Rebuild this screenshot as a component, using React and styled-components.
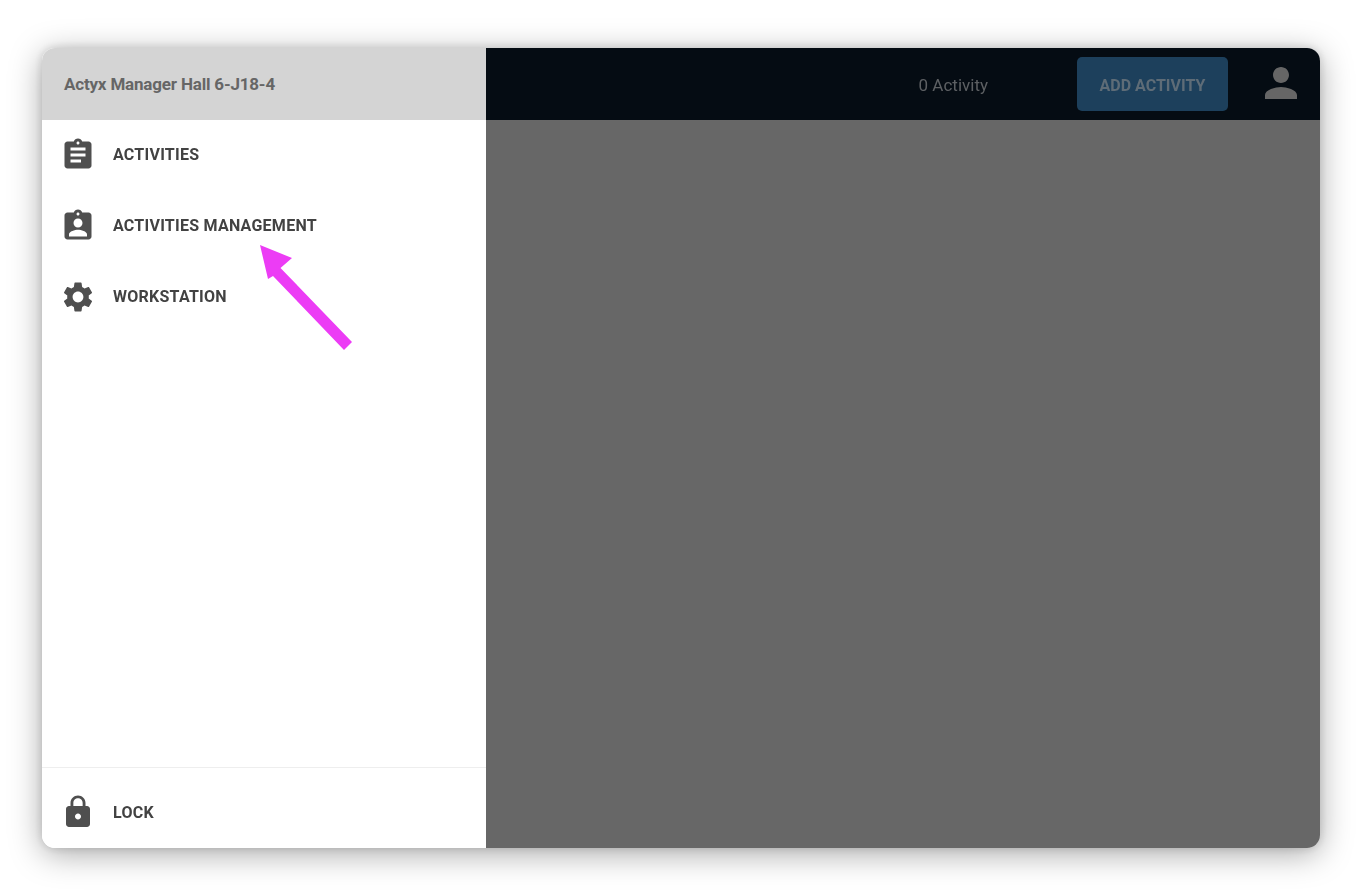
import styled, { createGlobalStyle } from "styled-components";

const GlobalStyle = createGlobalStyle`
    html, body {
        margin: 0;
        padding: 0;
        background: #fff;
        font-family: "Roboto", "Liberation Sans", sans-serif;
    }
`;

const Page = styled.div`
    height: 893px;
    box-sizing: border-box;
    padding: 48px 40px 45px 42px;
    overflow: hidden;
`;

const Window = styled.div`
    position: relative;
    display: flex;
    height: 800px;
    border-radius: 13px;
    overflow: hidden;
    box-shadow: 0 6px 32px rgba(0, 0, 0, 0.34), 0 0 10px rgba(0, 0, 0, 0.14);
    filter: blur(0.4px);
`;

const Sidebar = styled.aside`
    width: 444px;
    flex-shrink: 0;
    display: flex;
    flex-direction: column;
    background: #fff;
`;

const SidebarHeader = styled.div`
    height: 72px;
    display: flex;
    align-items: center;
    padding-left: 22px;
    background: #d4d4d4;
    color: #666;
    font-size: 17px;
    font-weight: 700;
    letter-spacing: -0.18px;
`;

const Nav = styled.nav`
    flex: 1;
    display: flex;
    flex-direction: column;
    margin-top: -1px;
`;

const NavItem = styled.div`
    height: 71px;
    display: flex;
    align-items: center;
    gap: 17px;
    padding-left: 18px;
    color: #424242;
    font-size: 16px;
    font-weight: 700;
    letter-spacing: 0.25px;
`;

const SidebarFooter = styled.div`
    height: 81px;
    box-sizing: border-box;
    padding-top: 8px;
    display: flex;
    align-items: center;
    border-top: 1px solid #eee;
`;

const Main = styled.main`
    flex: 1;
    display: flex;
    flex-direction: column;
    background: #676767;
`;

const TopBar = styled.header`
    height: 72px;
    display: flex;
    align-items: center;
    justify-content: flex-end;
    padding-right: 15px;
    background: #050c13;
`;

const Count = styled.span`
    margin: 2px 89px 0 0;
    color: #5d6063;
    font-size: 17px;
`;

const AddButton = styled.button`
    width: 151px;
    height: 54px;
    margin-right: 29px;
    padding: 2px 0 0;
    border: 0;
    border-radius: 5px;
    background: #1d405c;
    color: #5e6c77;
    font-family: inherit;
    font-size: 16px;
    font-weight: 700;
`;

const Account = styled.div`
    margin-bottom: 3px;
`;

const Icon = styled.svg`
    display: block;
    flex-shrink: 0;
    width: ${(props) => props.$size}px;
    height: ${(props) => props.$size}px;
    fill: ${(props) => props.$color};
`;

const ArrowOverlay = styled.svg`
    position: absolute;
    left: 0;
    top: 0;
    width: 400px;
    height: 320px;
    pointer-events: none;
`;

const paths = {
    assignment:
        "M19 3h-4.18C14.4 1.84 13.3 1 12 1c-1.3 0-2.4.84-2.82 2H5c-1.1 0-2 .9-2 2v14c0 1.1.9 2 2 2h14c1.1 0 2-.9 2-2V5c0-1.1-.9-2-2-2zm-7 0c.55 0 1 .45 1 1s-.45 1-1 1-1-.45-1-1 .45-1 1-1zm2 14H7v-2h7v2zm3-4H7v-2h10v2zm0-4H7V7h10v2z",
    assignmentInd:
        "M19 3h-4.18C14.4 1.84 13.3 1 12 1c-1.3 0-2.4.84-2.82 2H5c-1.1 0-2 .9-2 2v14c0 1.1.9 2 2 2h14c1.1 0 2-.9 2-2V5c0-1.1-.9-2-2-2zm-7 0c.55 0 1 .45 1 1s-.45 1-1 1-1-.45-1-1 .45-1 1-1zm0 4c1.66 0 3 1.34 3 3s-1.34 3-3 3-3-1.34-3-3 1.34-3 3-3zm6 12H6v-1.4c0-2 4-3.1 6-3.1s6 1.1 6 3.1V19z",
    settings:
        "M19.14 12.94c.04-.3.06-.61.06-.94 0-.32-.02-.64-.07-.94l2.03-1.58c.18-.14.23-.41.12-.61l-1.92-3.32c-.12-.22-.37-.29-.59-.22l-2.39.96c-.5-.38-1.03-.7-1.62-.94l-.36-2.54c-.04-.24-.24-.41-.48-.41h-3.84c-.24 0-.43.17-.47.41l-.36 2.54c-.59.24-1.13.57-1.62.94l-2.39-.96c-.22-.08-.47 0-.59.22L2.74 8.87c-.12.21-.08.47.12.61l2.03 1.58c-.05.3-.09.63-.09.94s.02.64.07.94l-2.03 1.58c-.18.14-.23.41-.12.61l1.92 3.32c.12.22.37.29.59.22l2.39-.96c.5.38 1.03.7 1.62.94l.36 2.54c.05.24.24.41.48.41h3.84c.24 0 .44-.17.47-.41l.36-2.54c.59-.24 1.13-.56 1.62-.94l2.39.96c.22.08.47 0 .59-.22l1.92-3.32c.12-.22.07-.47-.12-.61l-2.01-1.58zM12 15.6c-1.98 0-3.6-1.62-3.6-3.6s1.62-3.6 3.6-3.6 3.6 1.62 3.6 3.6-1.62 3.6-3.6 3.6z",
    lock:
        "M18 8h-1V6c0-2.76-2.24-5-5-5S7 3.24 7 6v2H6c-1.1 0-2 .9-2 2v10c0 1.1.9 2 2 2h12c1.1 0 2-.9 2-2V10c0-1.1-.9-2-2-2zm-6 9c-1.1 0-2-.9-2-2s.9-2 2-2 2 .9 2 2-.9 2-2 2zm3.1-9H8.9V6c0-1.71 1.39-3.1 3.1-3.1 1.71 0 3.1 1.39 3.1 3.1v2z",
    person:
        "M12 12c2.21 0 4-1.79 4-4s-1.79-4-4-4-4 1.79-4 4 1.79 4 4 4zm0 2c-2.67 0-8 1.34-8 4v2h16v-2c0-2.66-5.33-4-8-4z",
};

const MaterialIcon = ({ name, size = 36, color = "#4f4f4f" }) => (
    <Icon viewBox="0 0 24 24" $size={size} $color={color}>
        <path d={paths[name]} />
    </Icon>
);

const items = [
    { icon: "assignment", label: "ACTIVITIES" },
    { icon: "assignmentInd", label: "ACTIVITIES MANAGEMENT" },
    { icon: "settings", label: "WORKSTATION" },
];

const App = () => {
    return (
        <>
            <GlobalStyle />
            <Page>
                <Window>
                    <Sidebar>
                        <SidebarHeader>Actyx Manager Hall 6-J18-4</SidebarHeader>
                        <Nav>
                            {items.map((item) => (
                                <NavItem key={item.label}>
                                    <MaterialIcon name={item.icon} />
                                    {item.label}
                                </NavItem>
                            ))}
                        </Nav>
                        <SidebarFooter>
                            <NavItem>
                                <MaterialIcon name="lock" />
                                LOCK
                            </NavItem>
                        </SidebarFooter>
                    </Sidebar>
                    <Main>
                        <TopBar>
                            <Count>0 Activity</Count>
                            <AddButton>ADD ACTIVITY</AddButton>
                            <Account>
                                <MaterialIcon name="person" size={48} color="#666" />
                            </Account>
                        </TopBar>
                    </Main>
                    <ArrowOverlay viewBox="0 0 400 320">
                        <path
                            d="M218 197 L250 210 L238.5 220 L310 294 L302 302 L231 228 L226 231 Z"
                            fill="#ec3cf5"
                        />
                    </ArrowOverlay>
                </Window>
            </Page>
        </>
    );
};

export default App;
